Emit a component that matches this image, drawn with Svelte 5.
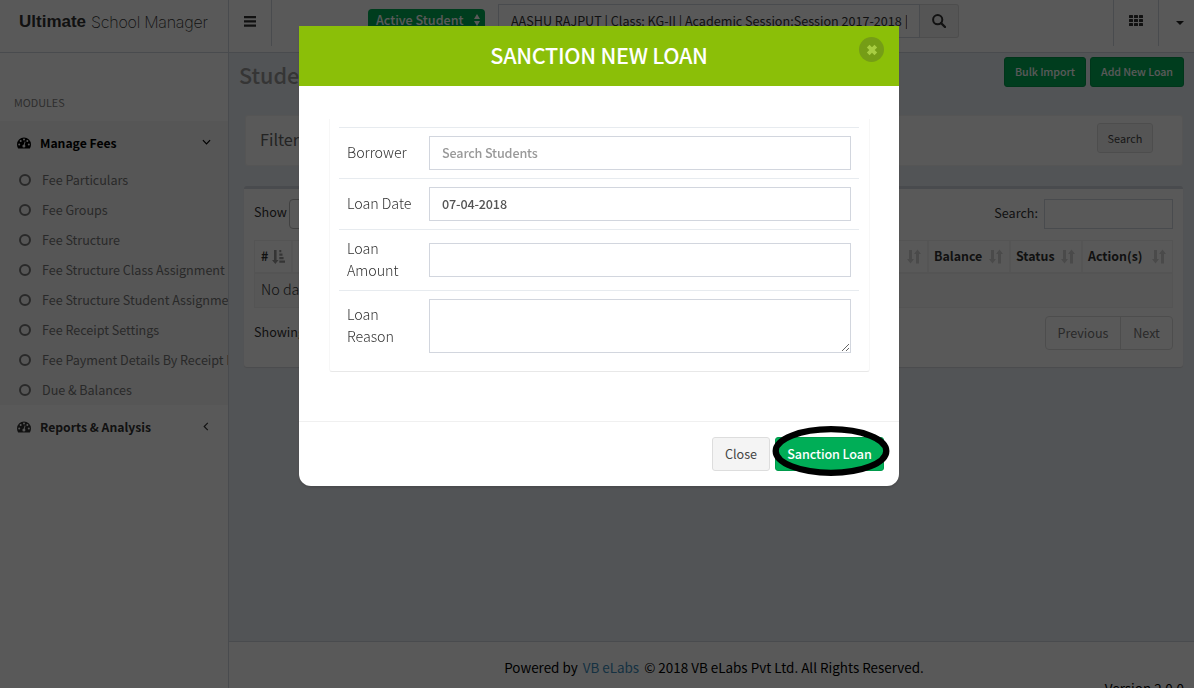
<script lang="ts">
  const feeLinks = [
    'Fee Particulars',
    'Fee Groups',
    'Fee Structure',
    'Fee Structure Class Assignment',
    'Fee Structure Student Assignment',
    'Fee Receipt Settings',
    'Fee Payment Details By Receipt No',
    'Due & Balances',
  ];

  const columns = [
    { label: 'Balance', cls: 'balance' },
    { label: 'Status', cls: 'status' },
    { label: 'Action(s)', cls: 'actions' },
  ];

  let borrower = '';
  let loanDate = '07-04-2018';
  let amount = '';
  let reason = '';
  let student = 'AASHU RAJPUT | Class: KG-II | Academic Session:Session 2017-2018 | Section: A';
</script>

{#snippet gauge()}
  <svg class="gauge" viewBox="0 0 14 12" width="14" height="12">
    <path fill="currentColor" d="M7 .5a7 7 0 0 0-7 7c0 1.300.4 2.600 1 3.700.1.200.3.300.5.300h11c.2 0 .4-.1.500-.3.6-1.100 1-2.400 1-3.700a7 7 0 0 0-7-7z" />
    <g class="gauge-dots">
      <circle cx="2.200" cy="7.500" r="1" />
      <circle cx="3.700" cy="4" r="1" />
      <circle cx="7" cy="2.500" r="1" />
      <circle cx="10.300" cy="4" r="1" />
      <circle cx="11.800" cy="7.500" r="1" />
      <circle cx="6.900" cy="8.900" r="1.500" />
      <path d="M7.600 4.500l.9.200-1 4-.9-.2z" />
    </g>
  </svg>
{/snippet}

{#snippet sortBoth()}
  <svg class="sort" viewBox="0 0 14 15" width="14" height="15">
    <path fill="currentColor" d="M2 1h3v9h2L3.500 14.500 0 10h2zM9 14.500h3V5h2L10.500.500 7 5h2z" />
  </svg>
{/snippet}

<div class="page">
  <header>
    <div class="logo"><b>Ultimate</b><span>School Manager</span></div>
    <nav>
      <div class="toggle">
        <svg viewBox="0 0 12 11" width="12" height="11"><path fill="currentColor" d="M0 0h12v2.200H0zM0 4.300h12v2.200H0zM0 8.600h12v2.200H0z" /></svg>
      </div>
      <div class="student-type">
        <span>Active Student</span>
        <svg viewBox="0 0 6 12" width="6" height="12"><path fill="currentColor" d="M3 0l3 5H0zM3 12l3-5H0z" /></svg>
      </div>
      <div class="student-search">
        <div class="student-name"><div>{student}</div></div>
        <button class="find" aria-label="Find">
          <svg viewBox="0 0 14 14" width="14" height="14">
            <circle cx="5.700" cy="5.700" r="4.600" fill="none" stroke="currentColor" stroke-width="2" />
            <path d="M9 9l4 4" stroke="currentColor" stroke-width="2.400" stroke-linecap="round" />
          </svg>
        </button>
      </div>
      <div class="nav-right">
        <div class="apps">
          <svg viewBox="0 0 14 11" width="14" height="11">
            {#each [0, 5, 10] as x}
              {#each [0, 4, 8] as y}
                <rect {x} {y} width="4" height="3" rx=".5" fill="currentColor" />
              {/each}
            {/each}
          </svg>
        </div>
        <div class="user"><i class="caret"></i></div>
      </div>
    </nav>
  </header>

  <div class="body">
    <aside>
      <div class="modules">MODULES</div>
      <div class="group">
        <div class="group-title active">
          {@render gauge()}
          <span>Manage Fees</span>
          <svg class="angle" viewBox="0 0 10 6" width="9" height="6"><path d="M1 1l4 4 4-4" fill="none" stroke="currentColor" stroke-width="1.300" /></svg>
        </div>
        <ul>
          {#each feeLinks as link}
            <li><i class="ring"></i><span>{link}</span></li>
          {/each}
        </ul>
      </div>
      <div class="group-title reports">
        {@render gauge()}
        <span>Reports &amp; Analysis</span>
        <svg class="angle left" viewBox="0 0 6 10" width="6" height="9"><path d="M5 1L1 5l4 4" fill="none" stroke="currentColor" stroke-width="1.300" /></svg>
      </div>
    </aside>

    <div class="main">
      <main>
        <div class="title-row">
          <h1>Student Loans</h1>
          <div class="title-actions">
            <button class="green small import">Bulk Import</button>
            <button class="green small add">Add New Loan</button>
          </div>
        </div>

        <div class="filter">
          <h3>Filter</h3>
          <button class="grey small search">Search</button>
        </div>

        <div class="box">
          <div class="tools">
            <span class="show">Show</span>
            <div class="length"></div>
            <span class="search-label">Search:</span>
            <input class="table-search" aria-label="Search" />
          </div>
          <div class="table">
            <div class="tr head">
              <div class="th num">
                #
                <svg class="sort-num" viewBox="0 0 13 14" width="13" height="14">
                  <path fill="currentColor" d="M2 0h2.600v10h2L3.300 14 0 10h2zM7.300 0h2v2.300h-2zM7.300 3.500h3.200v2.300H7.300zM7.300 7h4.300v2.300H7.300zM7.300 10.500H13v2.300H7.300z" />
                </svg>
              </div>
              <div class="th rest">{@render sortBoth()}</div>
              {#each columns as col}
                <div class="th {col.cls}"><span>{col.label}</span>{@render sortBoth()}</div>
              {/each}
            </div>
            <div class="empty">No data available in table</div>
          </div>
          <div class="table-foot">
            <span>Showing 0 to 0 of 0 entries</span>
            <div class="pager"><span>Previous</span><span>Next</span></div>
          </div>
        </div>
      </main>
      <footer>
        <p>Powered by <a href="#top">VB eLabs</a> © 2018 VB eLabs Pvt Ltd. All Rights Reserved.</p>
        <div class="version">Version 2.0.0</div>
      </footer>
    </div>
  </div>
</div>

<div class="overlay">
  <div class="modal" role="dialog">
    <div class="modal-header">
      <h2>SANCTION NEW LOAN</h2>
      <button class="close" aria-label="Close dialog">
        <svg viewBox="0 0 12 12" width="12" height="12"><path d="M2.200 2.200l7.600 7.600M9.800 2.200L2.200 9.800" stroke="currentColor" stroke-width="3.800" /></svg>
      </button>
    </div>
    <div class="modal-body">
      <div class="panel">
        <div class="field">
          <label for="borrower">Borrower</label>
          <input id="borrower" placeholder="Search Students" bind:value={borrower} />
        </div>
        <div class="field">
          <label for="date">Loan Date</label>
          <input id="date" bind:value={loanDate} />
        </div>
        <div class="field">
          <label for="amount">Loan Amount</label>
          <input id="amount" bind:value={amount} />
        </div>
        <div class="field">
          <label for="reason">Loan Reason</label>
          <textarea id="reason" bind:value={reason}></textarea>
        </div>
      </div>
    </div>
    <div class="modal-footer">
      <button class="grey cancel">Close</button>
      <div class="marked">
        <button class="green submit">Sanction Loan</button>
        <svg class="marker" viewBox="0 0 118 52" width="118" height="52"><ellipse cx="59" cy="26" rx="55.300" ry="21.800" fill="none" stroke="#000" stroke-width="6.300" /></svg>
      </div>
    </div>
  </div>
</div>

<style>
  :global(body) {
    margin: 0;
    overflow: hidden;
  }

  :global(*) {
    box-sizing: border-box;
  }

  .page,
  .overlay {
    font-family: "Noto Sans CJK SC", "Open Sans", sans-serif;
    font-size: 12.6px;
    line-height: 20px;
    color: #333;
  }

  button,
  input,
  textarea {
    font: inherit;
    color: inherit;
    margin: 0;
  }

  .page {
    height: 688px;
    display: flex;
    flex-direction: column;
    overflow: hidden;
    background: #fff;
  }

  header {
    display: flex;
    height: 53px;
    border-bottom: 1px solid #d2d6de;
  }

  .logo {
    width: 229px;
    padding: 12px 0 0 19px;
    border-right: 1px solid #d2d6de;
    font: 17px/20px "Liberation Sans", Arial, sans-serif;
    white-space: nowrap;
    display: flex;
    gap: 5px;
  }

  .logo span {
    font-family: Inter, sans-serif;
    font-weight: 200;
    font-size: 16px;
    letter-spacing: -0.25px;
  }

  nav {
    flex: 1;
    display: flex;
    align-items: flex-start;
  }

  .toggle {
    width: 43px;
    height: 46px;
    padding: 16px 0 0 15px;
    border-right: 1px solid #d2d6de;
  }

  svg {
    display: block;
  }

  .student-type {
    margin: 9px 0 0 96px;
    width: 117px;
    height: 24px;
    border-radius: 4px;
    background: #00ae57;
    color: #fff;
    font-weight: 500;
    display: flex;
    align-items: center;
    justify-content: space-between;
    padding: 0 5px 2px 8px;
  }

  .student-search {
    display: flex;
    margin: 4px 0 0 13px;
  }

  .student-name {
    width: 422px;
    height: 34px;
    padding: 6px 12px 0;
    border: 1px solid #d2d6de;
    white-space: nowrap;
  }

  .student-name div {
    overflow: hidden;
  }

  .find {
    width: 39px;
    height: 34px;
    padding: 0 0 0 12px;
    border: 1px solid #ddd;
    border-left: 0;
    border-radius: 0 3px 3px 0;
    background: #f4f4f4;
  }

  .nav-right {
    margin-left: auto;
    display: flex;
  }

  .apps,
  .user {
    height: 46px;
    border-left: 1px solid #d2d6de;
  }

  .apps {
    width: 45px;
    padding: 15px 0 0 15px;
  }

  .user {
    width: 36px;
    padding: 21px 0 0 17px;
  }

  .caret {
    display: block;
    width: 8px;
    border: 4px solid transparent;
    border-top-color: #222;
    border-bottom: 0;
  }

  .body {
    flex: 1;
    display: flex;
    min-height: 0;
  }

  aside {
    width: 229px;
    background: #fff;
    border-right: 1px solid #d2d6de;
    overflow: hidden;
  }

  .modules {
    height: 68px;
    padding: 39px 14px 0;
    font-size: 10.8px;
    color: #848484;
  }

  .group {
    background: #f6f6f6;
  }

  .group-title {
    height: 44px;
    display: flex;
    align-items: center;
    padding: 0 17px;
    font-weight: 700;
    font-size: 12.2px;
  }

  .group-title span {
    margin-left: 9px;
  }

  .group-title.active {
    color: #000;
  }

  .gauge-dots {
    fill: #f8f8f8;
  }

  .angle {
    margin: -3px 0 0 auto;
  }

  .angle.left {
    margin: -1px 2px 0 auto;
  }

  ul {
    list-style: none;
    margin: 0;
    padding: 0;
  }

  li {
    height: 30px;
    display: flex;
    align-items: center;
    padding-left: 19px;
    color: #777;
    white-space: nowrap;
    letter-spacing: -0.03px;
  }

  .ring {
    flex: none;
    width: 12px;
    height: 12px;
    margin-right: 11px;
    border: 2px solid #777;
    border-radius: 50%;
  }

  .main {
    flex: 1;
    display: flex;
    flex-direction: column;
    min-width: 0;
    background: #ecf0f5;
  }

  main {
    flex: 1;
    padding: 4px 10px 0;
  }

  .title-row {
    display: flex;
    justify-content: space-between;
    height: 58px;
  }

  h1 {
    margin: 3px 0 0;
    font-size: 21.6px;
    line-height: 30px;
    font-weight: 500;
    color: #999;
  }

  .title-actions {
    display: flex;
    gap: 4px;
  }

  .green,
  .grey {
    border-radius: 3px;
    padding: 0;
    white-space: nowrap;
  }

  .green {
    background: #00ae57;
    border: 1px solid #009a4b;
    color: #fff;
    font-weight: 500;
  }

  .grey {
    background: #f4f4f4;
    border: 1px solid #ddd;
    color: #444;
  }

  .small {
    height: 30px;
    font-size: 10.7px;
    letter-spacing: -0.08px;
  }

  .import {
    width: 82px;
  }

  .add {
    width: 94px;
  }

  .search {
    width: 56px;
    padding-bottom: 1px;
    font-size: 10.9px;
    letter-spacing: 0;
  }

  .filter {
    display: flex;
    justify-content: space-between;
    height: 51px;
    margin: 0 1px 0 6px;
    padding: 7px 29px 0 14px;
    background: #fff;
    border: 1px solid #f4f4f4;
    border-radius: 3px;
  }

  .filter h3 {
    margin: 6px 0 0;
    font-size: 16.2px;
    font-weight: 400;
    color: #666;
  }

  .box {
    height: 181px;
    margin: 20px 1px 0 5px;
    padding: 10px 10px 0;
    background: #fff;
    border-top: 3px solid #d2d6de;
    border-radius: 3px;
    box-shadow: 0 1px 1px rgba(0, 0, 0, 0.1);
  }

  .tools {
    display: flex;
    height: 30px;
    line-height: 27px;
  }

  .show {
    line-height: 25px;
  }

  .length {
    width: 60px;
    margin-left: 2px;
    border: 1px solid #bbb;
    border-radius: 4px;
  }

  .search-label {
    margin-left: auto;
  }

  .table-search {
    width: 129px;
    margin-left: 6px;
    border: 1px solid #d2d6de;
  }

  .table {
    margin-top: 11px;
    border: 1px solid #f0f0f0;
  }

  .tr {
    display: flex;
    height: 33px;
    border-bottom: 2px solid #f0f0f0;
  }

  .th {
    display: flex;
    justify-content: space-between;
    align-items: center;
    padding: 0 6px 2px 5px;
    border-right: 2px solid #f4f4f4;
    font-weight: 700;
    font-size: 12.4px;
  }

  .th:last-child {
    border-right: 0;
  }

  .th svg {
    margin-top: 2px;
  }

  .sort {
    color: #d4d4d4;
  }

  .sort-num {
    color: #999;
  }

  .num {
    width: 38px;
    padding-left: 6px;
  }

  .rest {
    flex: 1;
    justify-content: flex-end;
  }

  .balance {
    width: 82px;
  }

  .status {
    width: 72px;
  }

  .actions {
    width: 89px;
  }

  .empty {
    height: 33px;
    padding: 5px 6px;
    background: #f9f9f9;
    font-size: 14.4px;
    font-weight: 300;
  }

  .table-foot {
    display: flex;
    justify-content: space-between;
    padding-top: 8px;
    line-height: 32px;
  }

  .pager {
    display: flex;
    width: 128px;
    border: 1px solid #ddd;
    border-radius: 4px;
    color: #777;
  }

  .pager span {
    flex: 0 0 74px;
    text-align: center;
  }

  .pager span + span {
    flex: 1;
    border-left: 1px solid #ddd;
  }

  footer {
    height: 47px;
    background: #fff;
    border-top: 1px solid #d2d6de;
    color: #000;
  }

  footer p {
    margin: 15px 0 0;
    padding-left: 5px;
    text-align: center;
    font-size: 13.45px;
  }

  footer a {
    color: #3c8dbc;
    text-decoration: none;
    margin: 0 2px;
  }

  .version {
    text-align: right;
    padding-right: 10px;
    margin-top: 1px;
    font-size: 13.45px;
  }

  .overlay {
    position: fixed;
    inset: 0;
    background: rgba(0, 0, 0, 0.65);
    padding: 26px 0 0 299px;
  }

  .modal {
    width: 600px;
    height: 460px;
    background: #fff;
    border-radius: 0 0 12px 12px;
    box-shadow: 0 2px 3px rgba(0, 0, 0, 0.125);
  }

  .modal-header {
    height: 60px;
    display: grid;
    grid-template-columns: 40px 1fr 40px;
    background: #8bbf08;
    color: #fff;
  }

  .modal-header h2 {
    grid-column: 2;
    margin: 0;
    text-align: center;
    font-size: 21.6px;
    line-height: 57px;
    font-weight: 500;
    letter-spacing: -0.3px;
  }

  .close {
    width: 25px;
    height: 25px;
    margin-top: 11px;
    padding: 0 0 0 6.5px;
    border: 0;
    border-radius: 50%;
    background: #759d16;
    color: #a8cd42;
  }

  .modal-body {
    height: 335px;
    padding: 33px 29px 0 30px;
  }

  .panel {
    height: 253px;
    padding: 8px 10px 0 9px;
    border: 1px solid #f7f7f7;
    border-top: 0;
    border-bottom: 1px solid #e8e8e8;
    border-radius: 0 0 3px 3px;
  }

  .field {
    display: flex;
    align-items: center;
    gap: 8px;
    padding: 8px;
    border-top: 1px solid #e7ebef;
  }

  .field label {
    flex: 0 0 74px;
    margin: -1px 0 1px;
    font-size: 14.3px;
    line-height: 22px;
    font-weight: 300;
    letter-spacing: -0.05px;
  }

  .field input,
  .field textarea {
    display: block;
    width: 422px;
    height: 34px;
    padding: 5px 12px 7px;
    border: 1px solid #d2d6de;
    background: #fff;
    font-weight: 500;
    letter-spacing: -0.15px;
    color: #555;
    outline: 0;
  }

  .field textarea {
    height: 54px;
  }

  .field input::placeholder {
    color: #999;
    opacity: 1;
  }

  .modal-footer {
    height: 65px;
    display: flex;
    justify-content: flex-end;
    gap: 5px;
    padding: 15px 15px 0;
    border-top: 1px solid #f0f0f0;
  }

  .cancel {
    width: 58px;
    height: 34px;
  }

  .marked {
    position: relative;
  }

  .submit {
    width: 109px;
    height: 34px;
    letter-spacing: -0.1px;
  }

  .marker {
    position: absolute;
    left: -3.5px;
    top: -12px;
  }
</style>
